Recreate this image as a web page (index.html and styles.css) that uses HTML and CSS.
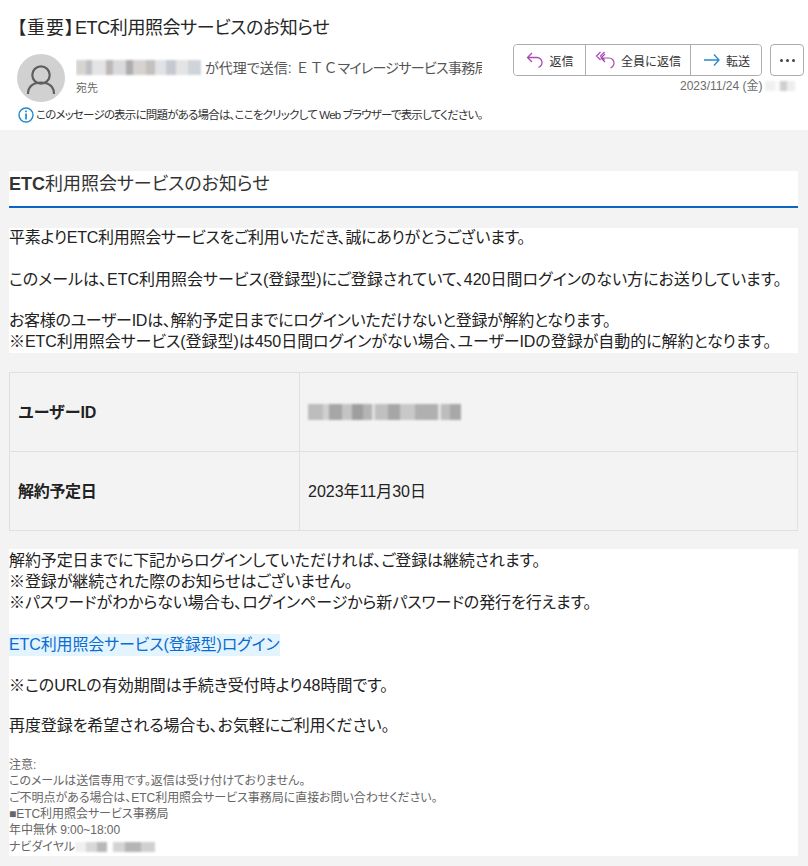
FILE: index.html
```html
<!DOCTYPE html>
<html lang="ja">
<head>
<meta charset="utf-8">
<title>【重要】ETC利用照会サービスのお知らせ</title>
<link rel="stylesheet" href="styles.css">
</head>
<body>
<header class="head">
  <h1 class="subject"><span class="subject-tag">【重要】</span><span class="subject-rest">ETC利用照会サービスのお知らせ</span></h1>
  <div class="meta">
    <div class="avatar">
      <svg viewBox="0 0 48 48" width="48" height="48"><circle cx="24" cy="21" r="8.7" fill="none" stroke="#5f5f5f" stroke-width="2.2"/><path d="M11 40c0-7.500 5.500-11.500 13-11.500S37 32.500 37 40" fill="none" stroke="#5f5f5f" stroke-width="2.200"/></svg>
    </div>
    <div class="who">
      <div class="sender"><span class="blur blur-sender"></span><span class="sender-text">が代理で送信: <span class="wide">ＥＴＣ</span><span class="narrow">マイレージサービス事務局</span></span></div>
      <div class="to">宛先</div>
    </div>
    <div class="actions">
      <div class="btns">
        <div class="group">
          <button class="btn btn-reply"><svg viewBox="0 0 20 20" width="20" height="20"><path d="M7 3 2.500 7.500 7 12M3 7.500h9a5 5 0 0 1 5 5c0 2.500-1.500 4-3.500 5" fill="none" stroke="#a94bb5" stroke-width="1.300"/></svg>返信</button>
          <button class="btn btn-all"><svg viewBox="0 0 22 20" width="22" height="20"><path d="M5.500 2 1.500 6l4 4M9.500 2l-4 4 4 4M10 4 6 8l4 4M7 8h7a5 5 0 0 1 5 5c0 2.500-1.500 4-3.500 5" fill="none" stroke="#a94bb5" stroke-width="1.200"/></svg>全員に返信</button>
          <button class="btn btn-fwd"><svg viewBox="0 0 20 20" width="20" height="20"><path d="M12 4.500 17 10l-5 5.500M2 10h15" fill="none" stroke="#2b88c8" stroke-width="1.300"/></svg>転送</button>
        </div>
        <button class="more" aria-label="その他"><span></span><span></span><span></span></button>
      </div>
      <div class="date">2023/11/24 (金)<span class="blur blur-time"></span></div>
    </div>
  </div>
  <div class="notice">
    <svg viewBox="0 0 16 16" width="16" height="16"><circle cx="8" cy="8" r="7" fill="none" stroke="#1f8ac9" stroke-width="1.400"/><rect x="7.200" y="3.500" width="1.700" height="1.700" fill="#1f8ac9"/><rect x="7.200" y="6.500" width="1.700" height="6" fill="#1f8ac9"/></svg>
    <span>このメッセージの表示に問題がある場合は、ここをクリックして Web ブラウザーで表示してください。</span>
  </div>
</header>
<main class="mail">
  <h2 class="title"><b>ETC</b>利用照会サービスのお知らせ</h2>
  <div class="block intro">
    <p class="tight-l">平素よりETC利用照会サービスをご利用いただき、誠にありがとうございます。</p>
    <p>このメールは、ETC利用照会サービス(登録型)にご登録されていて、420日間ログインのない方にお送りしています。</p>
    <p><span class="tight-l">お客様のユーザーIDは、解約予定日までにログインいただけないと登録が解約となります。</span><br><span class="tight-s">※ETC利用照会サービス(登録型)は450日間ログインがない場合、ユーザーIDの登録が自動的に解約となります。</span></p>
  </div>
  <table class="info">
    <tr><th>ユーザーID</th><td><span class="blur blur-id"></span></td></tr>
    <tr><th>解約予定日</th><td>2023年11月30日</td></tr>
  </table>
  <div class="block outro">
    <p class="tight-m lead">解約予定日までに下記からログインしていただければ、ご登録は継続されます。<br>※登録が継続された際のお知らせはございません。<br>※パスワードがわからない場合も、ログインページから新パスワードの発行を行えます。</p>
    <p class="lead link-row"><a class="link" href="#">ETC利用照会サービス(登録型)ログイン</a></p>
    <p class="url">※このURLの有効期間は手続き受付時より48時間です。</p>
    <p class="tight-m">再度登録を希望される場合も、お気軽にご利用ください。</p>
    <div class="foot">注意:<br>このメールは送信専用です。返信は受け付けておりません。<br>ご不明点がある場合は、ETC利用照会サービス事務局に直接お問い合わせください。<br>■ETC利用照会サービス事務局<br>年中無休 9:00~18:00<br>ナビダイヤル<span class="blur blur-tel"></span></div>
  </div>
</main>
</body>
</html>
```
FILE: styles.css
```css
* { box-sizing: border-box; }
html, body { margin: 0; padding: 0; }
body {
  height: 866px;
  overflow: hidden;
  background: #f3f3f3;
  color: #222;
  font-family: "Liberation Sans", "Noto Sans CJK JP", sans-serif;
  font-feature-settings: "palt";
}
.wide { font-feature-settings: normal; }
.narrow { letter-spacing: -0.700px; }
.head {
  height: 130px;
  background: #fff;
  padding: 16px 4px 0 17px;
  position: relative;
}
.subject {
  margin: 0;
  font-size: 18px;
  line-height: 24px;
  font-weight: 400;
  color: #262626;
}
.subject-tag { letter-spacing: 1px; }
.subject-rest { letter-spacing: -0.400px; }
.meta { display: flex; margin-top: 14px; height: 48px; }
.avatar {
  width: 48px; height: 48px; flex: none;
  border-radius: 50%;
  background: #d1d1d1;
}
.avatar svg { display: block; }
.who { width: 406px; margin-left: 11px; overflow: hidden; flex: none; }
.sender { display: flex; align-items: center; height: 26px; white-space: nowrap; font-size: 14px; color: #555; }
.sender-text { margin-left: 4px; }
.to { font-size: 11px; line-height: 14px; color: #666; margin-top: 1px; }
.actions { margin-left: 31px; margin-top: -10px; flex: none; width: 291px; }
.btns { display: flex; gap: 8px; }
.group { display: flex; height: 32px; width: 249px; border: 1px solid #adadad; border-radius: 4px; }
.btn {
  display: flex; align-items: center; justify-content: center;
  gap: 4px; padding: 0;
  background: #fff; border: 0;
  font: 12px "Liberation Sans", "Noto Sans CJK JP", sans-serif;
  color: #333;
  border-radius: 4px;
}
.btn-reply { width: 72px; border-right: 1px solid #adadad; border-radius: 4px 0 0 4px; }
.btn-all { width: 105px; border-right: 1px solid #adadad; border-radius: 0; }
.btn-fwd { flex: 1; }
.more {
  width: 34px; height: 32px;
  display: flex; align-items: center; justify-content: center; gap: 3px;
  background: #fff;
  border: 1px solid #adadad; border-radius: 4px; padding: 0;
}
.more span { width: 3px; height: 3px; border-radius: 50%; background: #444; }
.date { font-size: 12px; line-height: 16px; color: #6b6b6b; margin: 2px 0 0 167px; white-space: nowrap; display: flex; align-items: center; }
.notice {
  position: absolute; left: 18px; top: 107px;
  display: flex; align-items: center; gap: 2px;
  font-size: 11.500px; line-height: 16px; color: #333; white-space: nowrap;
  letter-spacing: -0.800px;
}
.mail { padding: 41px 10px 0 9px; }
.title {
  margin: 0;
  height: 37px;
  background: #fff;
  border-bottom: 2px solid #0a66c2;
  font-size: 18px;
  line-height: 26px;
  font-weight: 400;
  color: #333;
}
.block { background: #fff; font-size: 16px; line-height: 20.800px; color: #222; }
.block p { margin: 0 0 20.800px; }
.block p:last-child { margin-bottom: 0; }
.tight-l { letter-spacing: -0.280px; }
.tight-m { letter-spacing: -0.100px; }
.tight-s { letter-spacing: -0.050px; }
.intro { margin-top: 20px; }
.info {
  width: 100%;
  margin-top: 19px;
  border-collapse: collapse;
  table-layout: fixed;
  font-size: 16px;
  color: #222;
  font-feature-settings: normal;
}
.info th, .info td { height: 79px; border: 1px solid #e0e0e0; padding: 0 8px 2px; text-align: left; }
.info th { width: 290px; font-weight: 700; letter-spacing: -0.300px; }
.outro { margin-top: 18px; height: 307px; padding-top: 1px; }
.block .lead { line-height: 21px; margin-bottom: 21px; }
.block .link-row { margin-bottom: 20px; }
.block .url { margin-bottom: 19px; }
.link { color: #0a6ccc; background: #e3f4ff; text-decoration: none; display: inline-block; line-height: 22px; letter-spacing: -0.120px; }
.foot { margin-top: 20px; font-size: 12px; line-height: 16.300px; color: #666; letter-spacing: -0.040px; }
.blur { display: inline-block; flex: none; filter: blur(1.200px); }
.blur-sender { width: 125px; height: 15px; background: linear-gradient(90deg, #d8d4d2 0 8%, #bfc0c6 8% 13%, #e4e4e6 13% 24%, #bcb8b6 24% 30%, #dadadd 30% 40%, #adadb0 40% 46%, #d6d2cf 46% 56%, #c4c0bd 56% 63%, #e0e2e6 63% 72%, #c6cad0 72% 80%, #e4e4e4 80% 90%, #cfd4da 90% 100%); }
.blur-time { width: 30px; height: 10px; background: linear-gradient(90deg, #f0f0f0 0 35%, #fafafa 35% 50%, #cfcfcf 50% 72%, #eeeeee 72% 100%); margin-left: 2px; }
.blur-id { width: 153px; height: 16px; vertical-align: middle; background: linear-gradient(90deg, #bdbdbd 0 10%, #d0d0d0 10% 14%, #a6a6a6 14% 22%, #c4c4c4 22% 29%, #9e9e9e 29% 36%, #b4b4b4 36% 42%, #e2e2e2 42% 44%, #c0c0c0 44% 52%, #a6a6a6 52% 60%, #c8c8c8 60% 70%, #b0b0b0 70% 85%, #e4e4e4 85% 87%, #bdbdbd 87% 93%, #a8a8a8 93% 100%); }
.blur-tel { width: 80px; height: 10px; vertical-align: middle; background: linear-gradient(90deg, #f0f0f0 0 14%, #d8d8d8 14% 28%, #b8b8b8 28% 40%, #fff 40% 48%, #d4d4d4 48% 62%, #b5b5b5 62% 82%, #d0d0d0 82% 100%); }
```
